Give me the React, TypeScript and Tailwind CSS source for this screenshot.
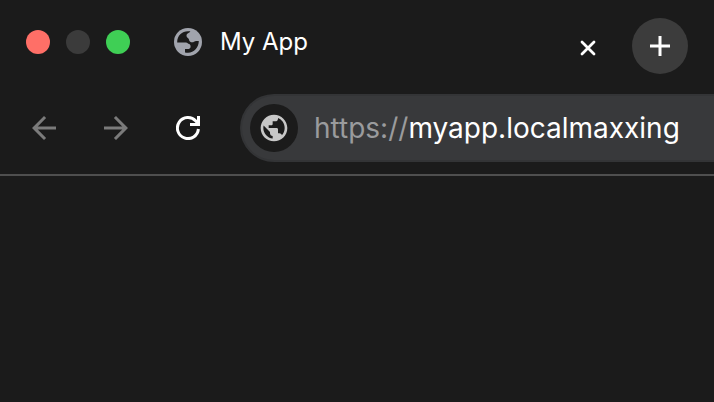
const TrafficLights = () => (
  <div className="mr-11 flex gap-4">
    <button aria-label="Close window" className="size-6 rounded-full bg-[#ff6f67]" />
    <button aria-label="Minimize window" className="size-6 rounded-full bg-[#3b3b3b]" />
    <button aria-label="Zoom window" className="size-6 rounded-full bg-[#3fcf55]" />
  </div>
);

const Favicon = () => (
  <svg width="28" height="28" viewBox="0 0 28 28" className="shrink-0">
    <circle cx="14" cy="14" r="14" fill="#a1a4ad" />
    <path
      d="M3.200 13.800C3.200 7.800 8 3.200 14 3.200h2.200c.3 1.300-3.700 2-3.700 4.300 0 1.500.9 2 1.700 2.700 1 .9.700 2.300 1.700 3.200.9.800 2.100 1.100 3.300.8 1.100-.3 1.600-1.100 2.800-1.100h2.800C24.800 19.500 20 24.800 14 24.800c-1.100 0-2.100-.1-3-.4v-3.300h2.400c1.900 0 3.200-1 3.200-2.700 0-1.500-1.100-2.300-2.200-2.600-.8-.2-.9-1.200-2.400-1.200H3.200z"
      fill="#1b1b1b"
    />
  </svg>
);

const Globe = () => (
  <svg width="32" height="32" viewBox="0 0 24 24" fill="#c7c7c7">
    <path d="M12 2C6.480 2 2 6.480 2 12s4.480 10 10 10 10-4.480 10-10S17.520 2 12 2zm-1 17.930c-3.950-.49-7-3.850-7-7.930 0-.62.08-1.210.21-1.790L9 15v1c0 1.100.9 2 2 2v1.930zm6.900-2.540c-.26-.81-1-1.390-1.900-1.390h-1v-3c0-.55-.45-1-1-1H8v-2h2c.55 0 1-.45 1-1V7h2c1.100 0 2-.9 2-2v-.41c2.930 1.190 5 4.060 5 7.410 0 2.080-.8 3.970-2.100 5.390z" />
  </svg>
);

const Arrow = () => (
  <svg width="24" height="24" viewBox="4 4 16 16" fill="currentColor">
    <path d="M20 11H7.830l5.590-5.590L12 4l-8 8 8 8 1.410-1.410L7.830 13H20v-2z" />
  </svg>
);

const Reload = () => (
  <svg width="24" height="24" viewBox="0 0 24 24" fill="none" stroke="currentColor" strokeWidth="3">
    <path d="M22.400 13A10.500 10.500 0 1 1 19.800 5.100L22 7.500" />
    <path d="M22.500 0v8.500H14" />
  </svg>
);

export default function App() {
  return (
    <div className="min-h-screen bg-[#1b1b1b] font-['Inter',sans-serif] text-white">
      <header className="border-b-2 border-[#4f4f4f]">
        <div className="flex items-center pt-[18px] pr-[26px] pl-[26px]">
          <div className="flex flex-1 items-center pb-2">
            <TrafficLights />
            <Favicon />
            <span className="ml-[18px] flex-1 text-2xl">My App</span>
          </div>
          <button aria-label="Close tab" className="mt-1 mr-9">
            <svg width="16" height="16" viewBox="0 0 16 16" stroke="currentColor" strokeWidth="2.8" strokeLinecap="round">
              <path d="M2 2l12 12M14 2L2 14" />
            </svg>
          </button>
          <button aria-label="New tab" className="flex size-14 items-center justify-center rounded-full bg-[#3c3c3c]">
            <svg width="20" height="20" viewBox="0 0 20 20" stroke="currentColor" strokeWidth="3">
              <path d="M10 0v20M0 10h20" />
            </svg>
          </button>
        </div>
        <div className="flex items-center pt-5 pb-3 pl-8">
          <nav className="mr-10 flex gap-12">
            <button aria-label="Back" className="text-[#7b7b7b]">
              <Arrow />
            </button>
            <button aria-label="Forward" className="-scale-x-100 text-[#7b7b7b]">
              <Arrow />
            </button>
            <button aria-label="Reload">
              <Reload />
            </button>
          </nav>
          <div className="flex h-[68px] min-w-0 flex-1 items-center rounded-l-full border-2 border-r-0 border-[#333436] bg-[#38393b] pl-2 text-[28px]">
            <button aria-label="Site information" className="mr-4 flex size-12 shrink-0 items-center justify-center rounded-full bg-[#1b1b1b]">
              <Globe />
            </button>
            <label htmlFor="address" className="text-[#9a9b9d]">
              https://
            </label>
            <input id="address" type="text" defaultValue="myapp.localmaxxing" spellCheck={false} className="min-w-0 flex-1 bg-transparent outline-none" />
          </div>
        </div>
      </header>
      <main />
    </div>
  );
}
